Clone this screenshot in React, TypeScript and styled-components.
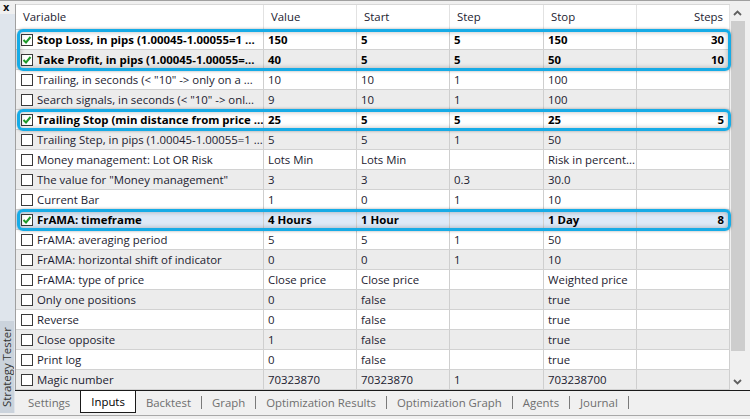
import React from "react";
import styled, { createGlobalStyle, css } from "styled-components";

const Global = createGlobalStyle`
  html, body { margin: 0; padding: 0; background: #f0f0f0; }
  body { font-family: "Open Sans", "Noto Sans", sans-serif; font-size: 11.4px; }
  * { box-sizing: border-box; }
`;

type Row = {
  name: string;
  checked?: boolean;
  value: string;
  start: string;
  step: string;
  stop: string;
  steps: string;
  selected?: boolean;
};

const rows: Row[] = [
  { name: "Stop Loss, in pips (1.00045-1.00055=1 ...", checked: true, value: "150", start: "5", step: "5", stop: "150", steps: "30" },
  { name: "Take Profit, in pips (1.00045-1.00055=...", checked: true, value: "40", start: "5", step: "5", stop: "50", steps: "10" },
  { name: "Trailing, in seconds (< \"10\" -> only on a ...", value: "10", start: "10", step: "1", stop: "100", steps: "" },
  { name: "Search signals, in seconds (< \"10\" -> onl...", value: "9", start: "10", step: "1", stop: "100", steps: "" },
  { name: "Trailing Stop (min distance from price ...", checked: true, value: "25", start: "5", step: "5", stop: "25", steps: "5" },
  { name: "Trailing Step, in pips (1.00045-1.00055=1 ...", value: "5", start: "5", step: "1", stop: "50", steps: "" },
  { name: "Money management: Lot OR Risk", value: "Lots Min", start: "Lots Min", step: "", stop: "Risk in percent...", steps: "" },
  { name: "The value for \"Money management\"", value: "3", start: "3", step: "0.3", stop: "30.0", steps: "" },
  { name: "Current Bar", value: "1", start: "0", step: "1", stop: "10", steps: "" },
  { name: "FrAMA: timeframe", checked: true, selected: true, value: "4 Hours", start: "1 Hour", step: "", stop: "1 Day", steps: "8" },
  { name: "FrAMA: averaging period", value: "5", start: "5", step: "1", stop: "50", steps: "" },
  { name: "FrAMA: horizontal shift of indicator", value: "0", start: "0", step: "1", stop: "10", steps: "" },
  { name: "FrAMA: type of price", value: "Close price", start: "Close price", step: "", stop: "Weighted price", steps: "" },
  { name: "Only one positions", value: "0", start: "false", step: "", stop: "true", steps: "" },
  { name: "Reverse", value: "0", start: "false", step: "", stop: "true", steps: "" },
  { name: "Close opposite", value: "1", start: "false", step: "", stop: "true", steps: "" },
  { name: "Print log", value: "0", start: "false", step: "", stop: "true", steps: "" },
  { name: "Magic number", value: "70323870", start: "70323870", step: "1", stop: "703238700", steps: "" },
];

const highlights = [
  { from: 0, count: 2 },
  { from: 4, count: 1 },
  { from: 9, count: 1 },
];

const tabs = ["Settings", "Inputs", "Backtest", "Graph", "Optimization Results", "Optimization Graph", "Agents", "Journal"];
const activeTab = 1;

const ROW_H = 20;
const COLS = "248px 93px 93px 94px 93px 93px";

const Frame = styled.div`
  width: 750px;
  height: 419px;
  display: flex;
  flex-direction: column;
  border-top: 1px solid #a0a0a0;
  background: #f0f0f0;
  overflow: hidden;
`;

const Body = styled.div`
  display: flex;
  height: 412px;
`;

const SideStrip = styled.div`
  width: 15px;
  display: flex;
  flex-direction: column;
  justify-content: space-between;
  background: linear-gradient(#f0f0f0 0 13px, #dfe5ec 13px);
`;

const CloseBtn = styled.div`
  height: 13px;
  font-family: "DejaVu Sans", sans-serif;
  font-size: 10px;
  font-weight: bold;
  line-height: 13px;
  padding-left: 3px;
  color: #111;
`;

const SideLabel = styled.div`
  writing-mode: vertical-rl;
  transform: rotate(180deg);
  background: #cbd3dc;
  width: 14px;
  height: 92px;
  font-size: 11.4px;
  line-height: 14px;
  color: #333;
  text-align: center;
  white-space: nowrap;
`;

const Content = styled.div`
  flex: 1;
  display: flex;
  flex-direction: column;
  padding-top: 3px;
`;

const TableArea = styled.div`
  display: flex;
  height: 386px;
`;

const Grid = styled.div`
  width: 715px;
  border-left: 1px solid #a0a0a0;
  background: #fff;
  display: flex;
  flex-direction: column;
`;

const HeaderRow = styled.div`
  display: grid;
  grid-template-columns: ${COLS};
  height: 26px;
  background: #fff;
  border-top: 1px solid #d8d8d8;
  border-bottom: 1px solid #d0d0d0;
`;

const HeaderCell = styled.div<{ $right?: boolean }>`
  border-right: 1px solid #e2e2e2;
  padding: 0 6px 0 7px;
  line-height: 24px;
  color: #1b1b30;
  white-space: nowrap;
  overflow: hidden;
  text-align: ${(p) => (p.$right ? "right" : "left")};
`;

const RowsWrap = styled.div`
  position: relative;
  flex: 1;
`;

const DataRow = styled.div<{ $alt: boolean; $selected: boolean; $bold: boolean }>`
  display: grid;
  grid-template-columns: ${COLS};
  height: ${ROW_H}px;
  background: ${(p) => (p.$selected ? "#dde9f7" : p.$alt ? "#ececec" : "#ffffff")};
  border-bottom: 1px solid #d2d2d2;
  font-weight: ${(p) => (p.$bold ? 700 : 400)};
  color: ${(p) => (p.$bold ? "#000" : "#1b1b30")};
`;

const Cell = styled.div<{ $right?: boolean }>`
  border-right: 1px solid #cfcfcf;
  padding: 0 5px 0 4px;
  line-height: 19px;
  white-space: nowrap;
  overflow: hidden;
  text-align: ${(p) => (p.$right ? "right" : "left")};
`;

const NameCell = styled.div`
  border-right: 1px solid #cfcfcf;
  display: flex;
  align-items: center;
  gap: 4px;
  padding-left: 5px;
  line-height: 19px;
  white-space: nowrap;
  overflow: hidden;
`;

const CheckBox = styled.span`
  flex: none;
  width: 12px;
  height: 12px;
  border: 1px solid #3a3a3a;
  background: #fff;
  display: flex;
  align-items: center;
  justify-content: center;
`;

const Highlight = styled.div<{ $top: number; $h: number }>`
  position: absolute;
  left: 1px;
  right: -1px;
  top: ${(p) => p.$top}px;
  height: ${(p) => p.$h}px;
  border: 3px solid #16abe6;
  border-radius: 6px;
  box-shadow: 0 0 3px rgba(0, 0, 0, 0.35), inset 0 0 5px rgba(0, 0, 0, 0.28);
  pointer-events: none;
`;

const Scrollbar = styled.div`
  width: 18px;
  background: #f0f0f0;
  display: flex;
  flex-direction: column;
  align-items: flex-start;
`;

const ArrowBtn = styled.div`
  width: 15px;
  height: 17px;
  display: flex;
  align-items: center;
  justify-content: center;
`;

const Thumb = styled.div`
  width: 14px;
  margin-left: 1px;
  height: 330px;
  background: #cdcdcd;
`;

const Track = styled.div`
  flex: 1;
  display: flex;
  flex-direction: column;
  justify-content: flex-start;
`;

const TabBar = styled.div`
  height: 23px;
  border-top: 1px solid #1a1a1a;
  display: flex;
  align-items: stretch;
  padding-left: 3px;
`;

const Tab = styled.div<{ $active: boolean }>`
  display: flex;
  align-items: center;
  padding: 0 10px;
  height: 22px;
  color: ${(p) => (p.$active ? "#000" : "#6e6e6e")};
  ${(p) =>
    p.$active &&
    css`
      background: #fff;
      border: 1px solid #1a1a1a;
      border-top: none;
    `}
`;

const Sep = styled.div`
  width: 1px;
  height: 13px;
  align-self: center;
  background: #7a7a7a;
`;

const Footer = styled.div`
  height: 3px;
  border-bottom: 1px solid #a8a8a8;
`;

const Check = () => (
  <svg width="10" height="10" viewBox="0 0 10 10">
    <path d="M1.5 5 L4 7.5 L8.5 2" fill="none" stroke="#1f9a2a" strokeWidth="2" />
  </svg>
);

const Chevron = ({ up }: { up: boolean }) => (
  <svg width="9" height="6" viewBox="0 0 9 6">
    <path d={up ? "M1 5 L4.5 1.5 L8 5" : "M1 1 L4.5 4.5 L8 1"} fill="none" stroke="#606060" strokeWidth="1.8" />
  </svg>
);

export default function App() {
  return (
    <>
      <Global />
      <Frame>
        <Body>
          <SideStrip>
            <CloseBtn>x</CloseBtn>
            <SideLabel>Strategy Tester</SideLabel>
          </SideStrip>
          <Content>
            <TableArea>
              <Grid>
                <HeaderRow>
                  <HeaderCell>Variable</HeaderCell>
                  <HeaderCell>Value</HeaderCell>
                  <HeaderCell>Start</HeaderCell>
                  <HeaderCell>Step</HeaderCell>
                  <HeaderCell>Stop</HeaderCell>
                  <HeaderCell $right>Steps</HeaderCell>
                </HeaderRow>
                <RowsWrap>
                  {rows.map((r, i) => (
                    <DataRow key={i} $alt={i % 2 === 1} $selected={!!r.selected} $bold={!!r.checked}>
                      <NameCell>
                        <CheckBox>{r.checked && <Check />}</CheckBox>
                        <span>{r.name}</span>
                      </NameCell>
                      <Cell>{r.value}</Cell>
                      <Cell>{r.start}</Cell>
                      <Cell>{r.step}</Cell>
                      <Cell>{r.stop}</Cell>
                      <Cell $right>{r.steps}</Cell>
                    </DataRow>
                  ))}
                  {highlights.map((h, i) => (
                    <Highlight key={i} $top={h.from * ROW_H - 1} $h={h.count * ROW_H + 2} />
                  ))}
                </RowsWrap>
              </Grid>
              <Scrollbar>
                <ArrowBtn>
                  <Chevron up />
                </ArrowBtn>
                <Track>
                  <Thumb />
                </Track>
                <ArrowBtn>
                  <Chevron up={false} />
                </ArrowBtn>
              </Scrollbar>
            </TableArea>
            <TabBar>
              {tabs.map((t, i) => (
                <React.Fragment key={t}>
                  <Tab $active={i === activeTab}>{t}</Tab>
                  {i > activeTab && <Sep />}
                </React.Fragment>
              ))}
            </TabBar>
          </Content>
        </Body>
        <Footer />
      </Frame>
    </>
  );
}
